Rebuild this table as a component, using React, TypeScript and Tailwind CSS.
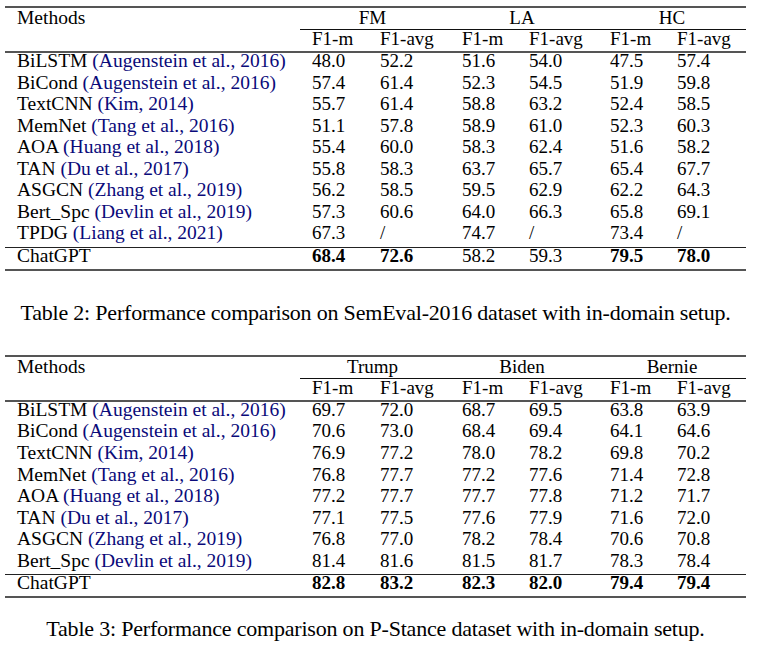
const grid = "grid grid-cols-[295px_68px_82px_67px_81px_67px_81px]";

type Row = { name: string; cite?: string; vals: string[]; bold?: boolean[] };

const semEval: Row[] = [
  { name: "BiLSTM", cite: "Augenstein et al., 2016", vals: ["48.0", "52.2", "51.6", "54.0", "47.5", "57.4"] },
  { name: "BiCond", cite: "Augenstein et al., 2016", vals: ["57.4", "61.4", "52.3", "54.5", "51.9", "59.8"] },
  { name: "TextCNN", cite: "Kim, 2014", vals: ["55.7", "61.4", "58.8", "63.2", "52.4", "58.5"] },
  { name: "MemNet", cite: "Tang et al., 2016", vals: ["51.1", "57.8", "58.9", "61.0", "52.3", "60.3"] },
  { name: "AOA", cite: "Huang et al., 2018", vals: ["55.4", "60.0", "58.3", "62.4", "51.6", "58.2"] },
  { name: "TAN", cite: "Du et al., 2017", vals: ["55.8", "58.3", "63.7", "65.7", "65.4", "67.7"] },
  { name: "ASGCN", cite: "Zhang et al., 2019", vals: ["56.2", "58.5", "59.5", "62.9", "62.2", "64.3"] },
  { name: "Bert_Spc", cite: "Devlin et al., 2019", vals: ["57.3", "60.6", "64.0", "66.3", "65.8", "69.1"] },
  { name: "TPDG", cite: "Liang et al., 2021", vals: ["67.3", "/", "74.7", "/", "73.4", "/"] },
];

const semEvalGpt: Row = {
  name: "ChatGPT",
  vals: ["68.4", "72.6", "58.2", "59.3", "79.5", "78.0"],
  bold: [true, true, false, false, true, true],
};

const pStance: Row[] = [
  { name: "BiLSTM", cite: "Augenstein et al., 2016", vals: ["69.7", "72.0", "68.7", "69.5", "63.8", "63.9"] },
  { name: "BiCond", cite: "Augenstein et al., 2016", vals: ["70.6", "73.0", "68.4", "69.4", "64.1", "64.6"] },
  { name: "TextCNN", cite: "Kim, 2014", vals: ["76.9", "77.2", "78.0", "78.2", "69.8", "70.2"] },
  { name: "MemNet", cite: "Tang et al., 2016", vals: ["76.8", "77.7", "77.2", "77.6", "71.4", "72.8"] },
  { name: "AOA", cite: "Huang et al., 2018", vals: ["77.2", "77.7", "77.7", "77.8", "71.2", "71.7"] },
  { name: "TAN", cite: "Du et al., 2017", vals: ["77.1", "77.5", "77.6", "77.9", "71.6", "72.0"] },
  { name: "ASGCN", cite: "Zhang et al., 2019", vals: ["76.8", "77.0", "78.2", "78.4", "70.6", "70.8"] },
  { name: "Bert_Spc", cite: "Devlin et al., 2019", vals: ["81.4", "81.6", "81.5", "81.7", "78.3", "78.4"] },
];

const pStanceGpt: Row = {
  name: "ChatGPT",
  vals: ["82.8", "83.2", "82.3", "82.0", "79.4", "79.4"],
  bold: [true, true, true, true, true, true],
};

function BodyRow({ row, last }: { row: Row; last?: boolean }) {
  return (
    <div className={`${grid} ${last ? "h-[21px]" : "h-[21.55px]"} leading-[16px]`}>
      <div className="pl-3 whitespace-nowrap text-[19.5px]">
        {row.name}
        {row.cite && <span className="text-[#0a0a7a]"> ({row.cite})</span>}
      </div>
      {row.vals.map((v, i) => (
        <div key={i} className={`pl-3 ${row.bold?.[i] ? "font-bold" : ""}`}>
          {v}
        </div>
      ))}
    </div>
  );
}

function ResultTable({ groups, rows, gpt }: { groups: string[]; rows: Row[]; gpt: Row }) {
  return (
    <div className="w-[741px] ml-[5px]">
      {/* top rule */}
      <div className="h-[2px] bg-[#555]" />

      {/* dataset header */}
      <div className={`${grid} h-[19px] leading-[19px]`}>
        <div className="pl-3 text-[19.5px]">Methods</div>
        <div className="col-span-2 text-center pr-[5px]">{groups[0]}</div>
        <div className="col-span-2 text-center pr-[4px]">{groups[1]}</div>
        <div className="col-span-2 text-center">{groups[2]}</div>
      </div>
      <div className={`${grid} mt-[2px]`}>
        <div className="col-start-2 col-span-6 h-px bg-[#111]" />
      </div>

      {/* metric header */}
      <div className={`${grid} h-[18px] leading-[17px]`}>
        <div />
        {["F1-m", "F1-avg", "F1-m", "F1-avg", "F1-m", "F1-avg"].map((m, i) => (
          <div key={i} className="pl-3">
            {m}
          </div>
        ))}
      </div>
      <div className="mt-[3px] h-[2px] bg-[#555]" />

      {rows.map((r) => (
        <BodyRow key={r.name} row={r} />
      ))}
      <div className="h-px bg-[#222]" />
      <BodyRow row={gpt} last />
      <div className="h-[2px] bg-[#555]" />
    </div>
  );
}

export default function App() {
  return (
    <div className="w-[758px] h-[649px] overflow-hidden bg-white text-black text-[19px] font-['Liberation_Serif',serif] pt-[6px]">
      <ResultTable groups={["FM", "LA", "HC"]} rows={semEval} gpt={semEvalGpt} />

      <p className="w-[741px] ml-[5px] mt-[30px] text-center text-[22px] leading-[24px] tracking-[-0.2px]">
        Table 2: Performance comparison on SemEval-2016 dataset with in-domain setup.
      </p>

      <div className="mt-[30px]">
        <ResultTable groups={["Trump", "Biden", "Bernie"]} rows={pStance} gpt={pStanceGpt} />
      </div>

      <p className="w-[741px] ml-[5px] mt-[19px] text-center text-[22px] leading-[24px] tracking-[-0.2px]">
        Table 3: Performance comparison on P-Stance dataset with in-domain setup.
      </p>
    </div>
  );
}
